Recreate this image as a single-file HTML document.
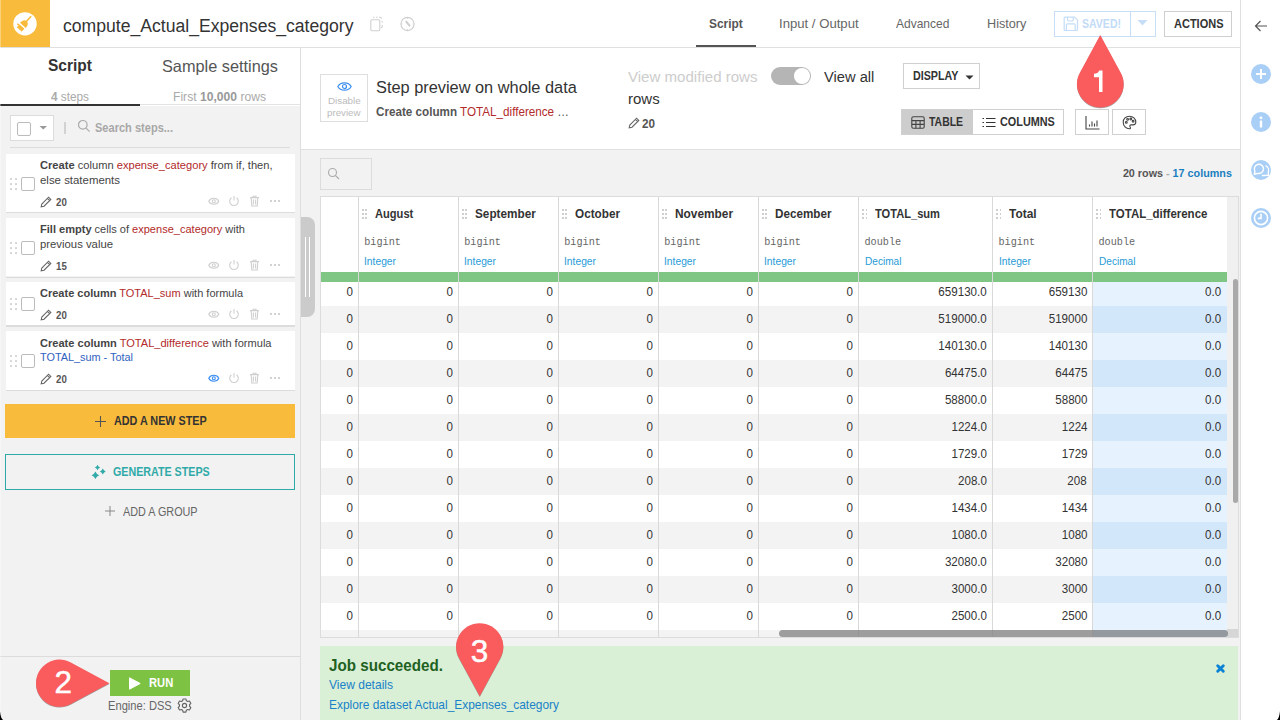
<!DOCTYPE html>
<html><head><meta charset="utf-8">
<style>
*{box-sizing:border-box;margin:0;padding:0}
html,body{width:1280px;height:720px;overflow:hidden;background:#fff;font-family:"Liberation Sans",sans-serif;color:#333}
.a{position:absolute}
.t{line-height:1;white-space:nowrap}
b{font-weight:700}
</style></head><body>
<div class="a" style="left:0px;top:0px;width:1240px;height:47px;background:#fff"></div>
<div class="a" style="left:0px;top:47px;width:1240px;height:1px;background:#e0e0e0"></div>
<div class="a" style="left:0px;top:0px;width:50px;height:47px;background:#f9bb3b"></div>
<svg class="a" style="left:0;top:0" width="50" height="47" viewBox="0 0 50 47">
<circle cx="25" cy="23.85" r="11.7" fill="#fff"/>
<g transform="translate(22.4 25.9) rotate(42)" fill="#f9bb3b">
<rect x="-0.8" y="-13.2" width="1.6" height="7.8" rx="0.8"/>
<path d="M-3.8 -0.7 C-3.9 -4.5 -2.4 -6.4 0 -6.4 C2.4 -6.4 3.9 -4.5 3.8 -0.7 Z"/>
<path d="M-3.4 0.7 H3.4 L3.2 4.9 L1.5 4.6 L0 5.0 L-1.6 4.6 L-3.2 4.9 Z"/>
<path d="M-3.4 0.7 L-5.6 1.4 L-5.2 2.6 L-3.3 2.4 Z"/>
</g></svg>
<svg class="a" style="left:368px;top:15px" width="18" height="18" viewBox="0 0 18 18" fill="none" stroke="#cfcfcf" stroke-width="1.1">
<rect x="2.8" y="4.8" width="9" height="11" rx="1.2"/>
<path d="M5 2.2 h1.5 M8 2.2 h1.5 M11 2.2 h1.3 l1.5 1.3 M14.2 6 v1.6 M14.2 10 v1.6 L13.3 13" />
</svg>
<svg class="a" style="left:399px;top:15px" width="17" height="18" viewBox="0 0 17 18" fill="none" stroke="#cfcfcf" stroke-width="1.1">
<circle cx="8.5" cy="9" r="6.6"/>
<path d="M6.3 6.5 L10.7 11.5 M7.2 5.9 L11.4 10.8" />
<path d="M8.5 2.4 v1.4 M8.5 14.2 v1.4 M1.9 9 h1.4 M13.7 9 h1.4"/>
</svg>
<div class="a" style="left:696px;top:45px;width:60px;height:2px;background:#555"></div>
<div class="a" style="left:1054px;top:11px;width:102px;height:26px;border:1px solid #c6def8;background:#fff"></div>
<div class="a" style="left:1130px;top:12px;width:1px;height:24px;background:#c6def8"></div>
<svg class="a" style="left:1063px;top:16px" width="16" height="16" viewBox="0 0 16 16" fill="none" stroke="#c4ddf8" stroke-width="1.2" stroke-linejoin="round">
<path d="M2.2 1.2 H11.5 L14.5 4.2 V13.5 Q14.5 14.5 13.5 14.5 H2.2 Q1.2 14.5 1.2 13.5 V2.2 Q1.2 1.2 2.2 1.2 Z"/><path d="M4.5 1.2 V3.4 Q4.5 5 6.1 5 H8.7 Q10.3 5 10.3 3.4 V1.2"/><path d="M3.4 14.5 V8.8 Q3.4 7.8 4.4 7.8 H11.2 Q12.2 7.8 12.2 8.8 V14.5"/>
</svg>
<svg class="a" style="left:1137px;top:19px" width="12" height="8" viewBox="0 0 12 8"><path d="M0.5 1 h10 l-5 5.5z" fill="#c6def8"/></svg>
<div class="a" style="left:1164px;top:11px;width:68px;height:26px;border:1px solid #cfcfcf;background:#fff"></div>
<div class="a" style="left:1240px;top:0px;width:1px;height:720px;background:#e0e0e0"></div>
<div class="a" style="left:1241px;top:0px;width:39px;height:720px;background:#fff"></div>
<svg class="a" style="left:1253px;top:18px" width="16" height="16" viewBox="0 0 16 16" fill="none" stroke="#555" stroke-width="1.2">
<path d="M14 8 H2.5 M7.5 3 L2.5 8 L7.5 13"/></svg>
<div class="a" style="left:1250.9px;top:63.7px;width:20.4px;height:20.4px;border-radius:50%;background:#a9cff6"></div>
<div class="a" style="left:1250.9px;top:111.8px;width:20.4px;height:20.4px;border-radius:50%;background:#a9cff6"></div>
<div class="a" style="left:1250.9px;top:159.70000000000002px;width:20.4px;height:20.4px;border-radius:50%;background:#a9cff6"></div>
<div class="a" style="left:1250.9px;top:207.8px;width:20.4px;height:20.4px;border-radius:50%;background:#a9cff6"></div>
<svg class="a" style="left:1251px;top:63.9px" width="20" height="20" viewBox="0 0 20 20" stroke="#fff" stroke-width="2" fill="none"><path d="M10 5 v10 M5 10 h10"/></svg>
<svg class="a" style="left:1251px;top:112px" width="20" height="20" viewBox="0 0 20 20" fill="#fff"><circle cx="10" cy="5.8" r="1.4"/><rect x="8.8" y="8.4" width="2.4" height="7.2" rx="0.6"/></svg>
<svg class="a" style="left:1251px;top:159.9px" width="20" height="20" viewBox="0 0 20 20" stroke="#fff" stroke-width="1.4" fill="none" stroke-linejoin="round"><path d="M3.92 11.2 A4.6 4.6 0 1 1 7.1 13.43 L3.3 14.3 Z"/><path d="M14.6 5.7 A5.2 5.2 0 0 1 17.3 12.2 L17.5 15.3 L10.8 15.5"/></svg>
<svg class="a" style="left:1251px;top:208px" width="20" height="20" viewBox="0 0 20 20" stroke="#fff" stroke-width="1.6" fill="none"><circle cx="10" cy="10" r="6.6"/><path d="M10 5.8 V10.4 H6.8"/></svg>
<div class="a" style="left:0px;top:48px;width:300px;height:58px;background:#fff"></div>
<div class="a" style="left:300px;top:48px;width:1px;height:672px;background:#dedede"></div>
<div class="a" style="left:0px;top:106px;width:300px;height:614px;background:#f2f2f2"></div>
<div class="a" style="left:0px;top:104px;width:300px;height:1px;background:#e3e3e3"></div>
<div class="a" style="left:0px;top:104px;width:140px;height:2px;background:#333"></div>
<div class="a" style="left:10px;top:115px;width:44px;height:26px;border:1px solid #dcdcdc;background:#fff"></div>
<div class="a" style="left:17px;top:122px;width:14px;height:14px;border:1px solid #bbb;border-radius:2px;background:#fff"></div>
<svg class="a" style="left:39px;top:125px" width="9" height="6" viewBox="0 0 9 6"><path d="M0.5 1 h7.5 l-3.75 3.6z" fill="#999"/></svg>
<div class="a" style="left:64px;top:122px;width:1.8px;height:11.8px;background:#d2d2d2"></div>
<svg class="a" style="left:77px;top:119px" width="14" height="14" viewBox="0 0 14 14" fill="none" stroke="#aaa" stroke-width="1.2"><circle cx="5.8" cy="5.8" r="4.3"/><path d="M8.8 8.8 L12.6 12.6"/></svg>
<div class="a" style="left:10px;top:147px;width:280px;height:1px;background:#dcdcdc"></div>
<div class="a" style="left:5.5px;top:153.7px;width:289px;height:58.5px;background:#fff"></div>
<div class="a" style="left:5.5px;top:212.29999999999998px;width:289px;height:1.2px;background:#dcdcdc"></div>
<div class="a" style="left:10px;top:177.7px;width:2.2px;height:2.2px;background:#d4d4d4;border-radius:0.5px"></div>
<div class="a" style="left:10px;top:182.7px;width:2.2px;height:2.2px;background:#d4d4d4;border-radius:0.5px"></div>
<div class="a" style="left:10px;top:187.7px;width:2.2px;height:2.2px;background:#d4d4d4;border-radius:0.5px"></div>
<div class="a" style="left:15px;top:177.7px;width:2.2px;height:2.2px;background:#d4d4d4;border-radius:0.5px"></div>
<div class="a" style="left:15px;top:182.7px;width:2.2px;height:2.2px;background:#d4d4d4;border-radius:0.5px"></div>
<div class="a" style="left:15px;top:187.7px;width:2.2px;height:2.2px;background:#d4d4d4;border-radius:0.5px"></div>
<div class="a" style="left:21px;top:176.7px;width:14px;height:14px;border:1px solid #bbb;border-radius:2px;background:#fff"></div>
<svg class="a" style="left:40px;top:196.0px" width="12" height="12" viewBox="0 0 12 12" fill="none" stroke="#666" stroke-width="1.1"><path d="M1.2 10.8 L1.8 8 L8.6 1.2 L10.8 3.4 L4 10.2 Z M7.4 2.4 L9.6 4.6"/></svg>
<svg class="a" style="left:207px;top:194.9px" width="13" height="12" viewBox="0 0 13 12" fill="none" stroke="#cfcfcf" stroke-width="1.1"><path d="M1.8 6.3 C3.6 2.3 10 2.3 11.8 6.3 C10 10.3 3.6 10.3 1.8 6.3 Z"/><circle cx="6.8" cy="6.3" r="1.5"/></svg>
<svg class="a" style="left:228px;top:194.9px" width="12" height="12" viewBox="0 0 12 12" fill="none" stroke="#cfcfcf" stroke-width="1.1"><path d="M6 1 V5.6 M3.4 2.8 A4.3 4.3 0 1 0 8.6 2.8"/></svg>
<svg class="a" style="left:249px;top:194.9px" width="11" height="12" viewBox="0 0 11 12" fill="none" stroke="#cfcfcf" stroke-width="1.1"><path d="M1 2.6 H10 M4 2.4 V1.2 H7 V2.4 M2.2 2.8 L2.8 11 H8.2 L8.8 2.8 M4.4 4.4 V9.4 M6.6 4.4 V9.4"/></svg>
<div class="a" style="left:270px;top:200px;width:2px;height:2px;background:#d2d2d2"></div>
<div class="a" style="left:274px;top:200px;width:2px;height:2px;background:#d2d2d2"></div>
<div class="a" style="left:278px;top:200px;width:2px;height:2px;background:#d2d2d2"></div>
<div class="a" style="left:5.5px;top:217.9px;width:289px;height:58.5px;background:#fff"></div>
<div class="a" style="left:5.5px;top:276.5px;width:289px;height:1.2px;background:#dcdcdc"></div>
<div class="a" style="left:10px;top:241.9px;width:2.2px;height:2.2px;background:#d4d4d4;border-radius:0.5px"></div>
<div class="a" style="left:10px;top:246.9px;width:2.2px;height:2.2px;background:#d4d4d4;border-radius:0.5px"></div>
<div class="a" style="left:10px;top:251.9px;width:2.2px;height:2.2px;background:#d4d4d4;border-radius:0.5px"></div>
<div class="a" style="left:15px;top:241.9px;width:2.2px;height:2.2px;background:#d4d4d4;border-radius:0.5px"></div>
<div class="a" style="left:15px;top:246.9px;width:2.2px;height:2.2px;background:#d4d4d4;border-radius:0.5px"></div>
<div class="a" style="left:15px;top:251.9px;width:2.2px;height:2.2px;background:#d4d4d4;border-radius:0.5px"></div>
<div class="a" style="left:21px;top:240.9px;width:14px;height:14px;border:1px solid #bbb;border-radius:2px;background:#fff"></div>
<svg class="a" style="left:40px;top:260.2px" width="12" height="12" viewBox="0 0 12 12" fill="none" stroke="#666" stroke-width="1.1"><path d="M1.2 10.8 L1.8 8 L8.6 1.2 L10.8 3.4 L4 10.2 Z M7.4 2.4 L9.6 4.6"/></svg>
<svg class="a" style="left:207px;top:259.09999999999997px" width="13" height="12" viewBox="0 0 13 12" fill="none" stroke="#cfcfcf" stroke-width="1.1"><path d="M1.8 6.3 C3.6 2.3 10 2.3 11.8 6.3 C10 10.3 3.6 10.3 1.8 6.3 Z"/><circle cx="6.8" cy="6.3" r="1.5"/></svg>
<svg class="a" style="left:228px;top:259.09999999999997px" width="12" height="12" viewBox="0 0 12 12" fill="none" stroke="#cfcfcf" stroke-width="1.1"><path d="M6 1 V5.6 M3.4 2.8 A4.3 4.3 0 1 0 8.6 2.8"/></svg>
<svg class="a" style="left:249px;top:259.09999999999997px" width="11" height="12" viewBox="0 0 11 12" fill="none" stroke="#cfcfcf" stroke-width="1.1"><path d="M1 2.6 H10 M4 2.4 V1.2 H7 V2.4 M2.2 2.8 L2.8 11 H8.2 L8.8 2.8 M4.4 4.4 V9.4 M6.6 4.4 V9.4"/></svg>
<div class="a" style="left:270px;top:264px;width:2px;height:2px;background:#d2d2d2"></div>
<div class="a" style="left:274px;top:264px;width:2px;height:2px;background:#d2d2d2"></div>
<div class="a" style="left:278px;top:264px;width:2px;height:2px;background:#d2d2d2"></div>
<div class="a" style="left:5.5px;top:281.8px;width:289px;height:43.5px;background:#fff"></div>
<div class="a" style="left:5.5px;top:325.40000000000003px;width:289px;height:1.2px;background:#dcdcdc"></div>
<div class="a" style="left:10px;top:298.3px;width:2.2px;height:2.2px;background:#d4d4d4;border-radius:0.5px"></div>
<div class="a" style="left:10px;top:303.3px;width:2.2px;height:2.2px;background:#d4d4d4;border-radius:0.5px"></div>
<div class="a" style="left:10px;top:308.3px;width:2.2px;height:2.2px;background:#d4d4d4;border-radius:0.5px"></div>
<div class="a" style="left:15px;top:298.3px;width:2.2px;height:2.2px;background:#d4d4d4;border-radius:0.5px"></div>
<div class="a" style="left:15px;top:303.3px;width:2.2px;height:2.2px;background:#d4d4d4;border-radius:0.5px"></div>
<div class="a" style="left:15px;top:308.3px;width:2.2px;height:2.2px;background:#d4d4d4;border-radius:0.5px"></div>
<div class="a" style="left:21px;top:297.3px;width:14px;height:14px;border:1px solid #bbb;border-radius:2px;background:#fff"></div>
<svg class="a" style="left:40px;top:309.0px" width="12" height="12" viewBox="0 0 12 12" fill="none" stroke="#666" stroke-width="1.1"><path d="M1.2 10.8 L1.8 8 L8.6 1.2 L10.8 3.4 L4 10.2 Z M7.4 2.4 L9.6 4.6"/></svg>
<svg class="a" style="left:207px;top:307.9px" width="13" height="12" viewBox="0 0 13 12" fill="none" stroke="#cfcfcf" stroke-width="1.1"><path d="M1.8 6.3 C3.6 2.3 10 2.3 11.8 6.3 C10 10.3 3.6 10.3 1.8 6.3 Z"/><circle cx="6.8" cy="6.3" r="1.5"/></svg>
<svg class="a" style="left:228px;top:307.9px" width="12" height="12" viewBox="0 0 12 12" fill="none" stroke="#cfcfcf" stroke-width="1.1"><path d="M6 1 V5.6 M3.4 2.8 A4.3 4.3 0 1 0 8.6 2.8"/></svg>
<svg class="a" style="left:249px;top:307.9px" width="11" height="12" viewBox="0 0 11 12" fill="none" stroke="#cfcfcf" stroke-width="1.1"><path d="M1 2.6 H10 M4 2.4 V1.2 H7 V2.4 M2.2 2.8 L2.8 11 H8.2 L8.8 2.8 M4.4 4.4 V9.4 M6.6 4.4 V9.4"/></svg>
<div class="a" style="left:270px;top:313px;width:2px;height:2px;background:#d2d2d2"></div>
<div class="a" style="left:274px;top:313px;width:2px;height:2px;background:#d2d2d2"></div>
<div class="a" style="left:278px;top:313px;width:2px;height:2px;background:#d2d2d2"></div>
<div class="a" style="left:5.5px;top:331.0px;width:289px;height:58.5px;background:#fff"></div>
<div class="a" style="left:5.5px;top:389.6px;width:289px;height:1.2px;background:#dcdcdc"></div>
<div class="a" style="left:10px;top:355.0px;width:2.2px;height:2.2px;background:#d4d4d4;border-radius:0.5px"></div>
<div class="a" style="left:10px;top:360.0px;width:2.2px;height:2.2px;background:#d4d4d4;border-radius:0.5px"></div>
<div class="a" style="left:10px;top:365.0px;width:2.2px;height:2.2px;background:#d4d4d4;border-radius:0.5px"></div>
<div class="a" style="left:15px;top:355.0px;width:2.2px;height:2.2px;background:#d4d4d4;border-radius:0.5px"></div>
<div class="a" style="left:15px;top:360.0px;width:2.2px;height:2.2px;background:#d4d4d4;border-radius:0.5px"></div>
<div class="a" style="left:15px;top:365.0px;width:2.2px;height:2.2px;background:#d4d4d4;border-radius:0.5px"></div>
<div class="a" style="left:21px;top:354.0px;width:14px;height:14px;border:1px solid #bbb;border-radius:2px;background:#fff"></div>
<svg class="a" style="left:40px;top:373.3px" width="12" height="12" viewBox="0 0 12 12" fill="none" stroke="#666" stroke-width="1.1"><path d="M1.2 10.8 L1.8 8 L8.6 1.2 L10.8 3.4 L4 10.2 Z M7.4 2.4 L9.6 4.6"/></svg>
<svg class="a" style="left:207px;top:372.2px" width="13" height="12" viewBox="0 0 13 12" fill="none" stroke="#3b8ef0" stroke-width="1.1"><path d="M1.8 6.3 C3.6 2.3 10 2.3 11.8 6.3 C10 10.3 3.6 10.3 1.8 6.3 Z"/><circle cx="6.8" cy="6.3" r="1.5"/></svg>
<svg class="a" style="left:228px;top:372.2px" width="12" height="12" viewBox="0 0 12 12" fill="none" stroke="#cfcfcf" stroke-width="1.1"><path d="M6 1 V5.6 M3.4 2.8 A4.3 4.3 0 1 0 8.6 2.8"/></svg>
<svg class="a" style="left:249px;top:372.2px" width="11" height="12" viewBox="0 0 11 12" fill="none" stroke="#cfcfcf" stroke-width="1.1"><path d="M1 2.6 H10 M4 2.4 V1.2 H7 V2.4 M2.2 2.8 L2.8 11 H8.2 L8.8 2.8 M4.4 4.4 V9.4 M6.6 4.4 V9.4"/></svg>
<div class="a" style="left:270px;top:377px;width:2px;height:2px;background:#d2d2d2"></div>
<div class="a" style="left:274px;top:377px;width:2px;height:2px;background:#d2d2d2"></div>
<div class="a" style="left:278px;top:377px;width:2px;height:2px;background:#d2d2d2"></div>
<div class="a" style="left:5px;top:404px;width:290px;height:34px;background:#f9bb3b"></div>
<svg class="a" style="left:95px;top:415.5px" width="11" height="11" viewBox="0 0 11 11" stroke="#555" stroke-width="1.1"><path d="M5.5 0 V11 M0 5.5 H11"/></svg>
<div class="a" style="left:5px;top:454px;width:290px;height:36px;border:1.5px solid #2faaa8"></div>
<svg class="a" style="left:91px;top:464px" width="18" height="18" viewBox="0 0 18 18" fill="#2faaa8"><path d="M6.5 0.7999999999999998 Q7.256 2.7439999999999998 9.2 3.5 Q7.256 4.256 6.5 6.2 Q5.744 4.256 3.8 3.5 Q5.744 2.7439999999999998 6.5 0.7999999999999998 Z M11.8 4.6 Q12.612 6.688 14.700000000000001 7.5 Q12.612 8.312 11.8 10.4 Q10.988000000000001 8.312 8.9 7.5 Q10.988000000000001 6.688 11.8 4.6 Z M4.4 7.500000000000001 Q5.464 10.236 8.2 11.3 Q5.464 12.364 4.4 15.100000000000001 Q3.3360000000000003 12.364 0.6000000000000005 11.3 Q3.3360000000000003 10.236 4.4 7.500000000000001 Z"/></svg>
<svg class="a" style="left:104.5px;top:506px" width="10" height="10" viewBox="0 0 10 10" stroke="#888" stroke-width="1"><path d="M5 0 V10 M0 5 H10"/></svg>
<div class="a" style="left:0px;top:656px;width:300px;height:1px;background:#dcdcdc"></div>
<div class="a" style="left:110px;top:670px;width:80px;height:26px;background:#7dc242"></div>
<svg class="a" style="left:129px;top:676.5px" width="12" height="13" viewBox="0 0 12 13"><path d="M0.5 0.8 L11.2 6.5 L0.5 12.2 Z" fill="#fff" stroke="#fff" stroke-linejoin="round" stroke-width="1"/></svg>
<svg class="a" style="left:176.9px;top:698.2px" width="15" height="15" viewBox="0 0 15 15" fill="none" stroke="#666" stroke-width="1.15" stroke-linejoin="round"><path d="M5.62 2.76 L6.11 0.95 L8.89 0.95 L9.38 2.76 L10.67 3.50 L12.48 3.02 L13.87 5.43 L12.55 6.75 L12.55 8.25 L13.87 9.57 L12.48 11.98 L10.67 11.50 L9.38 12.24 L8.89 14.05 L6.11 14.05 L5.62 12.24 L4.33 11.50 L2.52 11.98 L1.13 9.57 L2.45 8.25 L2.45 6.75 L1.13 5.43 L2.52 3.02 L4.33 3.50 Z"/><circle cx="7.5" cy="7.5" r="2.1"/></svg>
<div class="a" style="left:301px;top:48px;width:939px;height:101px;background:#fff"></div>
<div class="a" style="left:301px;top:149px;width:939px;height:1px;background:#e0e0e0"></div>
<div class="a" style="left:301px;top:150px;width:939px;height:570px;background:#f2f2f2"></div>
<div class="a" style="left:320px;top:74px;width:48px;height:48px;border:1px solid #dedede;background:#fff"></div>
<svg class="a" style="left:336.5px;top:80.5px" width="15" height="11" viewBox="0 0 15 11" fill="none" stroke="#3b8ef0" stroke-width="1.2"><path d="M0.8 5.5 C3.6 0.6 11.4 0.6 14.2 5.5 C11.4 10.4 3.6 10.4 0.8 5.5 Z"/><circle cx="7.5" cy="5.5" r="2"/></svg>
<div class="a" style="left:771px;top:67px;width:40px;height:18px;background:#b5b5b5;border-radius:9px"></div>
<div class="a" style="left:793.5px;top:68px;width:16.5px;height:16px;background:#fff;border-radius:50%"></div>
<svg class="a" style="left:628px;top:117px" width="12" height="12" viewBox="0 0 12 12" fill="none" stroke="#666" stroke-width="1.1"><path d="M1.2 10.8 L1.8 8 L8.6 1.2 L10.8 3.4 L4 10.2 Z M7.4 2.4 L9.6 4.6"/></svg>
<div class="a" style="left:903px;top:63px;width:77px;height:26px;border:1px solid #d0d0d0;background:#fff"></div>
<svg class="a" style="left:964.5px;top:74.5px" width="9" height="5" viewBox="0 0 9 5"><path d="M0.5 0.5 h8 l-4 4z" fill="#333"/></svg>
<div class="a" style="left:901px;top:109px;width:163px;height:26px;border:1px solid #d0d0d0;background:#fff"></div>
<div class="a" style="left:902px;top:110px;width:71px;height:24px;background:#cdcdcd"></div>
<svg class="a" style="left:910.5px;top:115.5px" width="14" height="13" viewBox="0 0 14 13" fill="none" stroke="#444" stroke-width="1.1"><rect x="0.8" y="0.8" width="12.4" height="11.4" rx="1.5"/><path d="M0.8 4.6 H13.2 M0.8 8.4 H13.2 M4.9 4.6 V12.2 M9.1 4.6 V12.2"/></svg>
<svg class="a" style="left:981.5px;top:116.5px" width="14" height="11" viewBox="0 0 14 11" fill="none" stroke="#333" stroke-width="1.1"><path d="M0.5 1.5 H2 M0.5 5.5 H2 M0.5 9.5 H2 M4 1.5 H13.5 M4 5.5 H13.5 M4 9.5 H13.5"/></svg>
<div class="a" style="left:1075px;top:109px;width:34px;height:26px;border:1px solid #d0d0d0;background:#fff"></div>
<svg class="a" style="left:1084.5px;top:114.5px" width="15" height="15" viewBox="0 0 15 15" fill="none" stroke="#444" stroke-width="1.1"><path d="M1 1 V14 H14.5 M4.5 11.5 V9.5 M7 11.5 V6.5 M9.5 11.5 V8.5 M12 11.5 V5.5"/></svg>
<div class="a" style="left:1112px;top:109px;width:34px;height:26px;border:1px solid #d0d0d0;background:#fff"></div>
<svg class="a" style="left:1121.5px;top:114.5px" width="15" height="15" viewBox="0 0 15 15" fill="none" stroke="#444" stroke-width="1.1"><path d="M7.5 1.2 C3.8 1.2 1.2 3.9 1.2 7.3 C1.2 10.9 4.1 13.8 7.3 13.8 C8.6 13.8 8.8 12.8 8.1 12 C7.4 11.1 7.9 9.9 9.1 9.9 H11 C12.6 9.9 13.8 8.8 13.8 7.1 C13.8 3.8 11 1.2 7.5 1.2 Z"/><circle cx="4.3" cy="7.4" r="0.9"/><circle cx="5.6" cy="4.4" r="0.9"/><circle cx="8.8" cy="4" r="0.9"/><circle cx="11.1" cy="6.2" r="0.9"/></svg>
<div class="a" style="left:320px;top:158px;width:52px;height:32px;border:1px solid #dcdcdc;background:#f2f2f2"></div>
<svg class="a" style="left:327px;top:167px" width="14" height="14" viewBox="0 0 14 14" fill="none" stroke="#aaa" stroke-width="1.1"><circle cx="5.5" cy="5.5" r="4"/><path d="M8.3 8.3 L12 12"/></svg>
<div class="a" style="left:320px;top:196px;width:919px;height:442px;background:#fff;border:1px solid #dcdcdc"></div>
<div class="a" style="left:1092.5px;top:278.75px;width:134.5px;height:27.0px;background:#e6f2fd"></div>
<div class="a" style="left:321px;top:305.75px;width:906px;height:27.0px;background:#f3f3f3"></div>
<div class="a" style="left:1092.5px;top:305.75px;width:134.5px;height:27.0px;background:#d3e7fa"></div>
<div class="a" style="left:1092.5px;top:332.75px;width:134.5px;height:27.0px;background:#e6f2fd"></div>
<div class="a" style="left:321px;top:359.75px;width:906px;height:27.0px;background:#f3f3f3"></div>
<div class="a" style="left:1092.5px;top:359.75px;width:134.5px;height:27.0px;background:#d3e7fa"></div>
<div class="a" style="left:1092.5px;top:386.75px;width:134.5px;height:27.0px;background:#e6f2fd"></div>
<div class="a" style="left:321px;top:413.75px;width:906px;height:27.0px;background:#f3f3f3"></div>
<div class="a" style="left:1092.5px;top:413.75px;width:134.5px;height:27.0px;background:#d3e7fa"></div>
<div class="a" style="left:1092.5px;top:440.75px;width:134.5px;height:27.0px;background:#e6f2fd"></div>
<div class="a" style="left:321px;top:467.75px;width:906px;height:27.0px;background:#f3f3f3"></div>
<div class="a" style="left:1092.5px;top:467.75px;width:134.5px;height:27.0px;background:#d3e7fa"></div>
<div class="a" style="left:1092.5px;top:494.75px;width:134.5px;height:27.0px;background:#e6f2fd"></div>
<div class="a" style="left:321px;top:521.75px;width:906px;height:27.0px;background:#f3f3f3"></div>
<div class="a" style="left:1092.5px;top:521.75px;width:134.5px;height:27.0px;background:#d3e7fa"></div>
<div class="a" style="left:1092.5px;top:548.75px;width:134.5px;height:27.0px;background:#e6f2fd"></div>
<div class="a" style="left:321px;top:575.75px;width:906px;height:27.0px;background:#f3f3f3"></div>
<div class="a" style="left:1092.5px;top:575.75px;width:134.5px;height:27.0px;background:#d3e7fa"></div>
<div class="a" style="left:1092.5px;top:602.75px;width:134.5px;height:27.0px;background:#e6f2fd"></div>
<div class="a" style="left:321px;top:629.75px;width:906px;height:7.25px;background:#f3f3f3"></div>
<div class="a" style="left:1092.5px;top:629.75px;width:134.5px;height:7.25px;background:#d3e7fa"></div>
<div class="a" style="left:321px;top:272px;width:906px;height:10px;background:#7fc685"></div>
<div class="a" style="left:357.75px;top:197px;width:1px;height:440px;background:#d9d9d9"></div>
<div class="a" style="left:457.75px;top:197px;width:1px;height:440px;background:#d9d9d9"></div>
<div class="a" style="left:557.75px;top:197px;width:1px;height:440px;background:#d9d9d9"></div>
<div class="a" style="left:657.75px;top:197px;width:1px;height:440px;background:#d9d9d9"></div>
<div class="a" style="left:757.75px;top:197px;width:1px;height:440px;background:#d9d9d9"></div>
<div class="a" style="left:858.0px;top:197px;width:1px;height:440px;background:#d9d9d9"></div>
<div class="a" style="left:992.0px;top:197px;width:1px;height:440px;background:#d9d9d9"></div>
<div class="a" style="left:1092.0px;top:197px;width:1px;height:440px;background:#d9d9d9"></div>
<div class="a" style="left:361.75px;top:209px;width:1.8px;height:1.8px;background:#cfcfcf"></div>
<div class="a" style="left:361.75px;top:213px;width:1.8px;height:1.8px;background:#cfcfcf"></div>
<div class="a" style="left:361.75px;top:217px;width:1.8px;height:1.8px;background:#cfcfcf"></div>
<div class="a" style="left:365.25px;top:209px;width:1.8px;height:1.8px;background:#cfcfcf"></div>
<div class="a" style="left:365.25px;top:213px;width:1.8px;height:1.8px;background:#cfcfcf"></div>
<div class="a" style="left:365.25px;top:217px;width:1.8px;height:1.8px;background:#cfcfcf"></div>
<div class="a" style="left:461.75px;top:209px;width:1.8px;height:1.8px;background:#cfcfcf"></div>
<div class="a" style="left:461.75px;top:213px;width:1.8px;height:1.8px;background:#cfcfcf"></div>
<div class="a" style="left:461.75px;top:217px;width:1.8px;height:1.8px;background:#cfcfcf"></div>
<div class="a" style="left:465.25px;top:209px;width:1.8px;height:1.8px;background:#cfcfcf"></div>
<div class="a" style="left:465.25px;top:213px;width:1.8px;height:1.8px;background:#cfcfcf"></div>
<div class="a" style="left:465.25px;top:217px;width:1.8px;height:1.8px;background:#cfcfcf"></div>
<div class="a" style="left:561.75px;top:209px;width:1.8px;height:1.8px;background:#cfcfcf"></div>
<div class="a" style="left:561.75px;top:213px;width:1.8px;height:1.8px;background:#cfcfcf"></div>
<div class="a" style="left:561.75px;top:217px;width:1.8px;height:1.8px;background:#cfcfcf"></div>
<div class="a" style="left:565.25px;top:209px;width:1.8px;height:1.8px;background:#cfcfcf"></div>
<div class="a" style="left:565.25px;top:213px;width:1.8px;height:1.8px;background:#cfcfcf"></div>
<div class="a" style="left:565.25px;top:217px;width:1.8px;height:1.8px;background:#cfcfcf"></div>
<div class="a" style="left:661.75px;top:209px;width:1.8px;height:1.8px;background:#cfcfcf"></div>
<div class="a" style="left:661.75px;top:213px;width:1.8px;height:1.8px;background:#cfcfcf"></div>
<div class="a" style="left:661.75px;top:217px;width:1.8px;height:1.8px;background:#cfcfcf"></div>
<div class="a" style="left:665.25px;top:209px;width:1.8px;height:1.8px;background:#cfcfcf"></div>
<div class="a" style="left:665.25px;top:213px;width:1.8px;height:1.8px;background:#cfcfcf"></div>
<div class="a" style="left:665.25px;top:217px;width:1.8px;height:1.8px;background:#cfcfcf"></div>
<div class="a" style="left:761.75px;top:209px;width:1.8px;height:1.8px;background:#cfcfcf"></div>
<div class="a" style="left:761.75px;top:213px;width:1.8px;height:1.8px;background:#cfcfcf"></div>
<div class="a" style="left:761.75px;top:217px;width:1.8px;height:1.8px;background:#cfcfcf"></div>
<div class="a" style="left:765.25px;top:209px;width:1.8px;height:1.8px;background:#cfcfcf"></div>
<div class="a" style="left:765.25px;top:213px;width:1.8px;height:1.8px;background:#cfcfcf"></div>
<div class="a" style="left:765.25px;top:217px;width:1.8px;height:1.8px;background:#cfcfcf"></div>
<div class="a" style="left:862.0px;top:209px;width:1.8px;height:1.8px;background:#cfcfcf"></div>
<div class="a" style="left:862.0px;top:213px;width:1.8px;height:1.8px;background:#cfcfcf"></div>
<div class="a" style="left:862.0px;top:217px;width:1.8px;height:1.8px;background:#cfcfcf"></div>
<div class="a" style="left:865.5px;top:209px;width:1.8px;height:1.8px;background:#cfcfcf"></div>
<div class="a" style="left:865.5px;top:213px;width:1.8px;height:1.8px;background:#cfcfcf"></div>
<div class="a" style="left:865.5px;top:217px;width:1.8px;height:1.8px;background:#cfcfcf"></div>
<div class="a" style="left:996.0px;top:209px;width:1.8px;height:1.8px;background:#cfcfcf"></div>
<div class="a" style="left:996.0px;top:213px;width:1.8px;height:1.8px;background:#cfcfcf"></div>
<div class="a" style="left:996.0px;top:217px;width:1.8px;height:1.8px;background:#cfcfcf"></div>
<div class="a" style="left:999.5px;top:209px;width:1.8px;height:1.8px;background:#cfcfcf"></div>
<div class="a" style="left:999.5px;top:213px;width:1.8px;height:1.8px;background:#cfcfcf"></div>
<div class="a" style="left:999.5px;top:217px;width:1.8px;height:1.8px;background:#cfcfcf"></div>
<div class="a" style="left:1096.0px;top:209px;width:1.8px;height:1.8px;background:#cfcfcf"></div>
<div class="a" style="left:1096.0px;top:213px;width:1.8px;height:1.8px;background:#cfcfcf"></div>
<div class="a" style="left:1096.0px;top:217px;width:1.8px;height:1.8px;background:#cfcfcf"></div>
<div class="a" style="left:1099.5px;top:209px;width:1.8px;height:1.8px;background:#cfcfcf"></div>
<div class="a" style="left:1099.5px;top:213px;width:1.8px;height:1.8px;background:#cfcfcf"></div>
<div class="a" style="left:1099.5px;top:217px;width:1.8px;height:1.8px;background:#cfcfcf"></div>
<div class="a" style="left:1227px;top:197px;width:11px;height:440px;background:#f0f0f0"></div>
<div class="a" style="left:1233px;top:279px;width:4.8px;height:224px;background:#a9a9a9;border-radius:3px"></div>
<div class="a" style="left:1227px;top:629px;width:11px;height:8px;background:#d6d6d6"></div>
<div class="a" style="left:778.8px;top:630px;width:449px;height:7px;background:rgba(120,120,120,0.7);border-radius:4px"></div>
<div class="a" style="left:300.5px;top:217px;width:14.2px;height:100px;background:#cbcbcb;border-radius:0 8px 8px 0"></div>
<div class="a" style="left:305px;top:237px;width:1px;height:60px;background:#fff"></div>
<div class="a" style="left:309px;top:237px;width:1px;height:60px;background:#fff"></div>
<div class="a" style="left:320px;top:646px;width:918px;height:74px;background:#d9efd6"></div>
<svg class="a" style="left:1215.3px;top:663.2px" width="11" height="11" viewBox="0 0 11 11" stroke="#0b83d4" stroke-width="2.9" stroke-linecap="round"><path d="M2.7 2.7 L8.3 8.3 M8.3 2.7 L2.7 8.3"/></svg>
<svg class="a" style="left:0;top:0;overflow:visible" width="1280" height="720"><path d="M1100.25 35.00 L1120.86 72.93 A23.4 23.4 0 1 1 1079.72 72.97 Z" fill="#555" opacity="0.55" transform="translate(0 0.7)"/><path d="M1100.25 35.00 L1120.86 72.93 A23.4 23.4 0 1 1 1079.72 72.97 Z" fill="#fa5b5c"/></svg>
<svg class="a" style="left:0;top:0;overflow:visible" width="1280" height="720"><path d="M1102.5 70.5 V92 H1099 V77.2 H1094 V73.8 C1096.6 73.8 1098.5 72.6 1099.1 70.5 Z" fill="#fff"/></svg>
<svg class="a" style="left:0;top:0;overflow:visible" width="1280" height="720"><path d="M109.40 683.20 L70.78 703.98 A23.6 23.6 0 1 1 70.78 662.42 Z" fill="#555" opacity="0.55" transform="translate(0 0.7)"/><path d="M109.40 683.20 L70.78 703.98 A23.6 23.6 0 1 1 70.78 662.42 Z" fill="#fa5b5c"/></svg>
<svg class="a" style="left:0;top:0;overflow:visible" width="1280" height="720"><path d="M479.75 696.25 L458.97 658.08 A23.6 23.6 0 1 1 500.45 658.04 Z" fill="#555" opacity="0.55" transform="translate(0 0.7)"/><path d="M479.75 696.25 L458.97 658.08 A23.6 23.6 0 1 1 500.45 658.04 Z" fill="#fa5b5c"/></svg>
<div class="a" style="left:0px;top:0px;width:1px;height:712px;background:rgba(255,255,255,0.32)"></div>
<svg class="a" style="left:0;top:0;overflow:visible" width="1280" height="720"><path d="M0 711.5 C0.6 716.5 1.5 719 3.2 720 L0 720 Z" fill="#000"/><path d="M1280 711 C1279.4 716 1278.5 719 1276.8 720 L1280 720 Z" fill="#000"/></svg>
<div class="a t" id="t0" style="top:17.705px;font-size:17.6px;font-weight:400;color:#333;font-family:'Liberation Sans', sans-serif;left:62.5px;transform:scaleX(1.0001);transform-origin:left top;">compute_Actual_Expenses_category</div>
<div class="a t" id="t1" style="top:17.914px;font-size:12.38px;font-weight:700;color:#555;font-family:'Liberation Sans', sans-serif;left:709.4px;transform:scaleX(0.9607);transform-origin:left top;">Script</div>
<div class="a t" id="t2" style="top:16.912px;font-size:13.25px;font-weight:400;color:#666;font-family:'Liberation Sans', sans-serif;left:779.4px;transform:scaleX(0.9913);transform-origin:left top;">Input / Output</div>
<div class="a t" id="t3" style="top:17.911px;font-size:12.9px;font-weight:400;color:#666;font-family:'Liberation Sans', sans-serif;left:896px;transform:scaleX(0.9312);transform-origin:left top;">Advanced</div>
<div class="a t" id="t4" style="top:16.906px;font-size:13.11px;font-weight:400;color:#666;font-family:'Liberation Sans', sans-serif;left:986.5px;transform:scaleX(0.9658);transform-origin:left top;">History</div>
<div class="a t" id="t5" style="top:18.007px;font-size:12.47px;font-weight:700;color:#c2dbf7;font-family:'Liberation Sans', sans-serif;left:1082px;transform:scaleX(0.8444);transform-origin:left top;">SAVED!</div>
<div class="a t" id="t6" style="top:19.005px;font-size:11.9px;font-weight:700;color:#333;font-family:'Liberation Sans', sans-serif;left:1173.5px;transform:scaleX(0.9250);transform-origin:left top;">ACTIONS</div>
<div class="a t" id="t7" style="top:56.703px;font-size:16.07px;font-weight:700;color:#333;font-family:'Liberation Sans', sans-serif;left:48px;transform:scaleX(0.9664);transform-origin:left top;">Script</div>
<div class="a t" id="t8" style="top:58.501px;font-size:15.67px;font-weight:400;color:#555;font-family:'Liberation Sans', sans-serif;left:162px;transform:scaleX(1.0414);transform-origin:left top;">Sample settings</div>
<div class="a t" id="t9" style="top:90.505px;font-size:12.14px;font-weight:400;color:#aaa;font-family:'Liberation Sans', sans-serif;left:51px;transform:scaleX(0.9716);transform-origin:left top;"><b style="color:#aaa">4</b> steps</div>
<div class="a t" id="t10" style="top:90.505px;font-size:12.25px;font-weight:400;color:#aaa;font-family:'Liberation Sans', sans-serif;left:173px;transform:scaleX(0.9897);transform-origin:left top;">First <b style="color:#999">10,000</b> rows</div>
<div class="a t" id="t11" style="top:121.505px;font-size:12.38px;font-weight:700;color:#a8a8a8;font-family:'Liberation Sans', sans-serif;left:95px;transform:scaleX(0.8929);transform-origin:left top;">Search steps...</div>
<div class="a t" id="t12" style="top:160.214px;font-size:11.59px;font-weight:400;color:#444;font-family:'Liberation Sans', sans-serif;left:40px;transform:scaleX(0.9611);transform-origin:left top;"><b>Create</b> column <span style="color:#b22a2a">expense_category</span> from if, then,</div>
<div class="a t" id="t13" style="top:173.814px;font-size:11.69px;font-weight:400;color:#444;font-family:'Liberation Sans', sans-serif;left:40px;transform:scaleX(0.9773);transform-origin:left top;">else statements</div>
<div class="a t" id="t14" style="top:197.011px;font-size:10.73px;font-weight:700;color:#555;font-family:'Liberation Sans', sans-serif;left:56.3px;transform:scaleX(0.9047);transform-origin:left top;">20</div>
<div class="a t" id="t15" style="top:224.412px;font-size:11.57px;font-weight:400;color:#444;font-family:'Liberation Sans', sans-serif;left:40px;transform:scaleX(0.9549);transform-origin:left top;"><b>Fill empty</b> cells of <span style="color:#b22a2a">expense_category</span> with</div>
<div class="a t" id="t16" style="top:238.013px;font-size:11.65px;font-weight:400;color:#444;font-family:'Liberation Sans', sans-serif;left:40px;transform:scaleX(0.9725);transform-origin:left top;">previous value</div>
<div class="a t" id="t17" style="top:261.208px;font-size:10.73px;font-weight:700;color:#555;font-family:'Liberation Sans', sans-serif;left:56.3px;transform:scaleX(0.9047);transform-origin:left top;">15</div>
<div class="a t" id="t18" style="top:288.314px;font-size:11.56px;font-weight:400;color:#444;font-family:'Liberation Sans', sans-serif;left:40px;transform:scaleX(0.9528);transform-origin:left top;"><b>Create column</b> <span style="color:#b22a2a">TOTAL_sum</span> with formula</div>
<div class="a t" id="t19" style="top:310.011px;font-size:10.73px;font-weight:700;color:#555;font-family:'Liberation Sans', sans-serif;left:56.3px;transform:scaleX(0.9047);transform-origin:left top;">20</div>
<div class="a t" id="t20" style="top:337.503px;font-size:11.57px;font-weight:400;color:#444;font-family:'Liberation Sans', sans-serif;left:40px;transform:scaleX(0.9562);transform-origin:left top;"><b>Create column</b> <span style="color:#b22a2a">TOTAL_difference</span> with formula</div>
<div class="a t" id="t21" style="top:352.113px;font-size:11.51px;font-weight:400;color:#444;font-family:'Liberation Sans', sans-serif;left:40px;transform:scaleX(0.9449);transform-origin:left top;"><span style="color:#3062c0">TOTAL_sum - Total</span></div>
<div class="a t" id="t22" style="top:374.314px;font-size:10.73px;font-weight:700;color:#555;font-family:'Liberation Sans', sans-serif;left:56.3px;transform:scaleX(0.9047);transform-origin:left top;">20</div>
<div class="a t" id="t23" style="top:415.201px;font-size:12.03px;font-weight:700;color:#333;font-family:'Liberation Sans', sans-serif;left:114.4px;transform:scaleX(0.8978);transform-origin:left top;">ADD A NEW STEP</div>
<div class="a t" id="t24" style="top:466.014px;font-size:12.0px;font-weight:700;color:#2faaa8;font-family:'Liberation Sans', sans-serif;left:112.6px;transform:scaleX(0.8915);transform-origin:left top;">GENERATE STEPS</div>
<div class="a t" id="t25" style="top:506.011px;font-size:12.04px;font-weight:400;color:#666;font-family:'Liberation Sans', sans-serif;left:123.4px;transform:scaleX(0.8998);transform-origin:left top;">ADD A GROUP</div>
<div class="a t" id="t26" style="top:677.900px;font-size:11.88px;font-weight:700;color:#fff;font-family:'Liberation Sans', sans-serif;left:148.6px;transform:scaleX(0.9404);transform-origin:left top;">RUN</div>
<div class="a t" id="t27" style="top:699.511px;font-size:12.28px;font-weight:400;color:#666;font-family:'Liberation Sans', sans-serif;left:108px;transform:scaleX(0.9084);transform-origin:left top;">Engine: DSS</div>
<div class="a t" id="t28" style="top:95.905px;font-size:9.53px;font-weight:400;color:#bbb;font-family:'Liberation Sans', sans-serif;left:327.7px;transform:scaleX(1.0304);transform-origin:left top;">Disable</div>
<div class="a t" id="t29" style="top:107.505px;font-size:9.5px;font-weight:400;color:#bbb;font-family:'Liberation Sans', sans-serif;left:327.3px;transform:scaleX(1.0229);transform-origin:left top;">preview</div>
<div class="a t" id="t30" style="top:79.013px;font-size:16.32px;font-weight:400;color:#333;font-family:'Liberation Sans', sans-serif;left:376.25px;transform:scaleX(1.0019);transform-origin:left top;">Step preview on whole data</div>
<div class="a t" id="t31" style="top:106.265px;font-size:12.11px;font-weight:400;color:#555;font-family:'Liberation Sans', sans-serif;left:376.25px;transform:scaleX(0.9632);transform-origin:left top;"><b style="color:#555">Create column</b> <span style="color:#b22a2a">TOTAL_difference</span> …</div>
<div class="a t" id="t32" style="top:69.710px;font-size:14.53px;font-weight:400;color:#cdcdcd;font-family:'Liberation Sans', sans-serif;left:628.3px;transform:scaleX(1.0378);transform-origin:left top;">View modified rows</div>
<div class="a t" id="t33" style="top:69.709px;font-size:14.42px;font-weight:400;color:#333;font-family:'Liberation Sans', sans-serif;left:824px;transform:scaleX(1.0204);transform-origin:left top;">View all</div>
<div class="a t" id="t34" style="top:91.605px;font-size:14.51px;font-weight:400;color:#333;font-family:'Liberation Sans', sans-serif;left:628.3px;transform:scaleX(1.0351);transform-origin:left top;">rows</div>
<div class="a t" id="t35" style="top:119.308px;font-size:11.9px;font-weight:700;color:#555;font-family:'Liberation Sans', sans-serif;left:642px;transform:scaleX(0.9823);transform-origin:left top;">20</div>
<div class="a t" id="t36" style="top:70.008px;font-size:12.21px;font-weight:700;color:#333;font-family:'Liberation Sans', sans-serif;left:912.9px;transform:scaleX(0.8787);transform-origin:left top;">DISPLAY</div>
<div class="a t" id="t37" style="top:116.101px;font-size:12.3px;font-weight:700;color:#333;font-family:'Liberation Sans', sans-serif;left:929px;transform:scaleX(0.8483);transform-origin:left top;">TABLE</div>
<div class="a t" id="t38" style="top:116.114px;font-size:12.45px;font-weight:700;color:#333;font-family:'Liberation Sans', sans-serif;left:1000.2px;transform:scaleX(0.8716);transform-origin:left top;">COLUMNS</div>
<div class="a t" id="t39" style="top:167.211px;font-size:11.76px;font-weight:700;color:#555;font-family:'Liberation Sans', sans-serif;right:48.299999999999955px;transform:scaleX(0.9169);transform-origin:right top;"><span style="color:#555">20 rows</span> <span style="color:#aaa">-</span> <span style="color:#1a7fc1">17 columns</span></div>
<div class="a t" id="t40" style="top:208.216px;font-size:12.4px;font-weight:700;color:#333;font-family:'Liberation Sans', sans-serif;left:374.75px;transform:scaleX(0.8975);transform-origin:left top;">August</div>
<div class="a t" id="t41" style="top:238.100px;font-size:10.2px;font-weight:400;color:#666;font-family:'Liberation Mono', monospace;left:364.25px;">bigint</div>
<div class="a t" id="t42" style="top:256.011px;font-size:11.32px;font-weight:400;color:#1f9bd6;font-family:'Liberation Sans', sans-serif;left:364.25px;transform:scaleX(0.9082);transform-origin:left top;">Integer</div>
<div class="a t" id="t43" style="top:208.202px;font-size:12.62px;font-weight:700;color:#333;font-family:'Liberation Sans', sans-serif;left:474.75px;transform:scaleX(0.9329);transform-origin:left top;">September</div>
<div class="a t" id="t44" style="top:238.100px;font-size:10.2px;font-weight:400;color:#666;font-family:'Liberation Mono', monospace;left:464.25px;">bigint</div>
<div class="a t" id="t45" style="top:256.011px;font-size:11.32px;font-weight:400;color:#1f9bd6;font-family:'Liberation Sans', sans-serif;left:464.25px;transform:scaleX(0.9082);transform-origin:left top;">Integer</div>
<div class="a t" id="t46" style="top:208.210px;font-size:12.61px;font-weight:700;color:#333;font-family:'Liberation Sans', sans-serif;left:574.75px;transform:scaleX(0.9305);transform-origin:left top;">October</div>
<div class="a t" id="t47" style="top:238.100px;font-size:10.2px;font-weight:400;color:#666;font-family:'Liberation Mono', monospace;left:564.25px;">bigint</div>
<div class="a t" id="t48" style="top:256.011px;font-size:11.32px;font-weight:400;color:#1f9bd6;font-family:'Liberation Sans', sans-serif;left:564.25px;transform:scaleX(0.9082);transform-origin:left top;">Integer</div>
<div class="a t" id="t49" style="top:208.207px;font-size:12.65px;font-weight:700;color:#333;font-family:'Liberation Sans', sans-serif;left:674.75px;transform:scaleX(0.9397);transform-origin:left top;">November</div>
<div class="a t" id="t50" style="top:238.100px;font-size:10.2px;font-weight:400;color:#666;font-family:'Liberation Mono', monospace;left:664.25px;">bigint</div>
<div class="a t" id="t51" style="top:256.011px;font-size:11.32px;font-weight:400;color:#1f9bd6;font-family:'Liberation Sans', sans-serif;left:664.25px;transform:scaleX(0.9082);transform-origin:left top;">Integer</div>
<div class="a t" id="t52" style="top:208.211px;font-size:12.59px;font-weight:700;color:#333;font-family:'Liberation Sans', sans-serif;left:774.75px;transform:scaleX(0.9288);transform-origin:left top;">December</div>
<div class="a t" id="t53" style="top:238.100px;font-size:10.2px;font-weight:400;color:#666;font-family:'Liberation Mono', monospace;left:764.25px;">bigint</div>
<div class="a t" id="t54" style="top:256.011px;font-size:11.32px;font-weight:400;color:#1f9bd6;font-family:'Liberation Sans', sans-serif;left:764.25px;transform:scaleX(0.9082);transform-origin:left top;">Integer</div>
<div class="a t" id="t55" style="top:208.216px;font-size:12.4px;font-weight:700;color:#333;font-family:'Liberation Sans', sans-serif;left:875.0px;transform:scaleX(0.8962);transform-origin:left top;">TOTAL_sum</div>
<div class="a t" id="t56" style="top:238.100px;font-size:10.2px;font-weight:400;color:#666;font-family:'Liberation Mono', monospace;left:864.5px;">double</div>
<div class="a t" id="t57" style="top:256.015px;font-size:11.26px;font-weight:400;color:#1f9bd6;font-family:'Liberation Sans', sans-serif;left:864.5px;transform:scaleX(0.8957);transform-origin:left top;">Decimal</div>
<div class="a t" id="t58" style="top:208.206px;font-size:12.67px;font-weight:700;color:#333;font-family:'Liberation Sans', sans-serif;left:1009.0px;transform:scaleX(0.9421);transform-origin:left top;">Total</div>
<div class="a t" id="t59" style="top:238.100px;font-size:10.2px;font-weight:400;color:#666;font-family:'Liberation Mono', monospace;left:998.5px;">bigint</div>
<div class="a t" id="t60" style="top:256.011px;font-size:11.32px;font-weight:400;color:#1f9bd6;font-family:'Liberation Sans', sans-serif;left:998.5px;transform:scaleX(0.9082);transform-origin:left top;">Integer</div>
<div class="a t" id="t61" style="top:208.208px;font-size:12.52px;font-weight:700;color:#333;font-family:'Liberation Sans', sans-serif;left:1109.0px;transform:scaleX(0.9167);transform-origin:left top;">TOTAL_difference</div>
<div class="a t" id="t62" style="top:238.100px;font-size:10.2px;font-weight:400;color:#666;font-family:'Liberation Mono', monospace;left:1098.5px;">double</div>
<div class="a t" id="t63" style="top:256.015px;font-size:11.26px;font-weight:400;color:#1f9bd6;font-family:'Liberation Sans', sans-serif;left:1098.5px;transform:scaleX(0.8957);transform-origin:left top;">Decimal</div>
<div class="a t" id="t64" style="top:286.110px;font-size:12.4px;font-weight:400;color:#333;font-family:'Liberation Sans', sans-serif;right:927.15px;transform:scaleX(0.935);transform-origin:right top;">0</div>
<div class="a t" id="t65" style="top:286.110px;font-size:12.4px;font-weight:400;color:#333;font-family:'Liberation Sans', sans-serif;right:827.15px;transform:scaleX(0.935);transform-origin:right top;">0</div>
<div class="a t" id="t66" style="top:286.110px;font-size:12.4px;font-weight:400;color:#333;font-family:'Liberation Sans', sans-serif;right:727.15px;transform:scaleX(0.935);transform-origin:right top;">0</div>
<div class="a t" id="t67" style="top:286.110px;font-size:12.4px;font-weight:400;color:#333;font-family:'Liberation Sans', sans-serif;right:627.15px;transform:scaleX(0.935);transform-origin:right top;">0</div>
<div class="a t" id="t68" style="top:286.110px;font-size:12.4px;font-weight:400;color:#333;font-family:'Liberation Sans', sans-serif;right:527.15px;transform:scaleX(0.935);transform-origin:right top;">0</div>
<div class="a t" id="t69" style="top:286.110px;font-size:12.4px;font-weight:400;color:#333;font-family:'Liberation Sans', sans-serif;right:426.9px;transform:scaleX(0.935);transform-origin:right top;">0</div>
<div class="a t" id="t70" style="top:286.110px;font-size:12.4px;font-weight:400;color:#333;font-family:'Liberation Sans', sans-serif;right:292.9px;transform:scaleX(0.935);transform-origin:right top;">659130.0</div>
<div class="a t" id="t71" style="top:286.110px;font-size:12.4px;font-weight:400;color:#333;font-family:'Liberation Sans', sans-serif;right:192.9000000000001px;transform:scaleX(0.935);transform-origin:right top;">659130</div>
<div class="a t" id="t72" style="top:286.110px;font-size:12.4px;font-weight:400;color:#333;font-family:'Liberation Sans', sans-serif;right:58.40000000000009px;transform:scaleX(0.935);transform-origin:right top;">0.0</div>
<div class="a t" id="t73" style="top:313.110px;font-size:12.4px;font-weight:400;color:#333;font-family:'Liberation Sans', sans-serif;right:927.15px;transform:scaleX(0.935);transform-origin:right top;">0</div>
<div class="a t" id="t74" style="top:313.110px;font-size:12.4px;font-weight:400;color:#333;font-family:'Liberation Sans', sans-serif;right:827.15px;transform:scaleX(0.935);transform-origin:right top;">0</div>
<div class="a t" id="t75" style="top:313.110px;font-size:12.4px;font-weight:400;color:#333;font-family:'Liberation Sans', sans-serif;right:727.15px;transform:scaleX(0.935);transform-origin:right top;">0</div>
<div class="a t" id="t76" style="top:313.110px;font-size:12.4px;font-weight:400;color:#333;font-family:'Liberation Sans', sans-serif;right:627.15px;transform:scaleX(0.935);transform-origin:right top;">0</div>
<div class="a t" id="t77" style="top:313.110px;font-size:12.4px;font-weight:400;color:#333;font-family:'Liberation Sans', sans-serif;right:527.15px;transform:scaleX(0.935);transform-origin:right top;">0</div>
<div class="a t" id="t78" style="top:313.110px;font-size:12.4px;font-weight:400;color:#333;font-family:'Liberation Sans', sans-serif;right:426.9px;transform:scaleX(0.935);transform-origin:right top;">0</div>
<div class="a t" id="t79" style="top:313.110px;font-size:12.4px;font-weight:400;color:#333;font-family:'Liberation Sans', sans-serif;right:292.9px;transform:scaleX(0.935);transform-origin:right top;">519000.0</div>
<div class="a t" id="t80" style="top:313.110px;font-size:12.4px;font-weight:400;color:#333;font-family:'Liberation Sans', sans-serif;right:192.9000000000001px;transform:scaleX(0.935);transform-origin:right top;">519000</div>
<div class="a t" id="t81" style="top:313.110px;font-size:12.4px;font-weight:400;color:#333;font-family:'Liberation Sans', sans-serif;right:58.40000000000009px;transform:scaleX(0.935);transform-origin:right top;">0.0</div>
<div class="a t" id="t82" style="top:340.110px;font-size:12.4px;font-weight:400;color:#333;font-family:'Liberation Sans', sans-serif;right:927.15px;transform:scaleX(0.935);transform-origin:right top;">0</div>
<div class="a t" id="t83" style="top:340.110px;font-size:12.4px;font-weight:400;color:#333;font-family:'Liberation Sans', sans-serif;right:827.15px;transform:scaleX(0.935);transform-origin:right top;">0</div>
<div class="a t" id="t84" style="top:340.110px;font-size:12.4px;font-weight:400;color:#333;font-family:'Liberation Sans', sans-serif;right:727.15px;transform:scaleX(0.935);transform-origin:right top;">0</div>
<div class="a t" id="t85" style="top:340.110px;font-size:12.4px;font-weight:400;color:#333;font-family:'Liberation Sans', sans-serif;right:627.15px;transform:scaleX(0.935);transform-origin:right top;">0</div>
<div class="a t" id="t86" style="top:340.110px;font-size:12.4px;font-weight:400;color:#333;font-family:'Liberation Sans', sans-serif;right:527.15px;transform:scaleX(0.935);transform-origin:right top;">0</div>
<div class="a t" id="t87" style="top:340.110px;font-size:12.4px;font-weight:400;color:#333;font-family:'Liberation Sans', sans-serif;right:426.9px;transform:scaleX(0.935);transform-origin:right top;">0</div>
<div class="a t" id="t88" style="top:340.110px;font-size:12.4px;font-weight:400;color:#333;font-family:'Liberation Sans', sans-serif;right:292.9px;transform:scaleX(0.935);transform-origin:right top;">140130.0</div>
<div class="a t" id="t89" style="top:340.110px;font-size:12.4px;font-weight:400;color:#333;font-family:'Liberation Sans', sans-serif;right:192.9000000000001px;transform:scaleX(0.935);transform-origin:right top;">140130</div>
<div class="a t" id="t90" style="top:340.110px;font-size:12.4px;font-weight:400;color:#333;font-family:'Liberation Sans', sans-serif;right:58.40000000000009px;transform:scaleX(0.935);transform-origin:right top;">0.0</div>
<div class="a t" id="t91" style="top:367.110px;font-size:12.4px;font-weight:400;color:#333;font-family:'Liberation Sans', sans-serif;right:927.15px;transform:scaleX(0.935);transform-origin:right top;">0</div>
<div class="a t" id="t92" style="top:367.110px;font-size:12.4px;font-weight:400;color:#333;font-family:'Liberation Sans', sans-serif;right:827.15px;transform:scaleX(0.935);transform-origin:right top;">0</div>
<div class="a t" id="t93" style="top:367.110px;font-size:12.4px;font-weight:400;color:#333;font-family:'Liberation Sans', sans-serif;right:727.15px;transform:scaleX(0.935);transform-origin:right top;">0</div>
<div class="a t" id="t94" style="top:367.110px;font-size:12.4px;font-weight:400;color:#333;font-family:'Liberation Sans', sans-serif;right:627.15px;transform:scaleX(0.935);transform-origin:right top;">0</div>
<div class="a t" id="t95" style="top:367.110px;font-size:12.4px;font-weight:400;color:#333;font-family:'Liberation Sans', sans-serif;right:527.15px;transform:scaleX(0.935);transform-origin:right top;">0</div>
<div class="a t" id="t96" style="top:367.110px;font-size:12.4px;font-weight:400;color:#333;font-family:'Liberation Sans', sans-serif;right:426.9px;transform:scaleX(0.935);transform-origin:right top;">0</div>
<div class="a t" id="t97" style="top:367.110px;font-size:12.4px;font-weight:400;color:#333;font-family:'Liberation Sans', sans-serif;right:292.9px;transform:scaleX(0.935);transform-origin:right top;">64475.0</div>
<div class="a t" id="t98" style="top:367.110px;font-size:12.4px;font-weight:400;color:#333;font-family:'Liberation Sans', sans-serif;right:192.9000000000001px;transform:scaleX(0.935);transform-origin:right top;">64475</div>
<div class="a t" id="t99" style="top:367.110px;font-size:12.4px;font-weight:400;color:#333;font-family:'Liberation Sans', sans-serif;right:58.40000000000009px;transform:scaleX(0.935);transform-origin:right top;">0.0</div>
<div class="a t" id="t100" style="top:394.110px;font-size:12.4px;font-weight:400;color:#333;font-family:'Liberation Sans', sans-serif;right:927.15px;transform:scaleX(0.935);transform-origin:right top;">0</div>
<div class="a t" id="t101" style="top:394.110px;font-size:12.4px;font-weight:400;color:#333;font-family:'Liberation Sans', sans-serif;right:827.15px;transform:scaleX(0.935);transform-origin:right top;">0</div>
<div class="a t" id="t102" style="top:394.110px;font-size:12.4px;font-weight:400;color:#333;font-family:'Liberation Sans', sans-serif;right:727.15px;transform:scaleX(0.935);transform-origin:right top;">0</div>
<div class="a t" id="t103" style="top:394.110px;font-size:12.4px;font-weight:400;color:#333;font-family:'Liberation Sans', sans-serif;right:627.15px;transform:scaleX(0.935);transform-origin:right top;">0</div>
<div class="a t" id="t104" style="top:394.110px;font-size:12.4px;font-weight:400;color:#333;font-family:'Liberation Sans', sans-serif;right:527.15px;transform:scaleX(0.935);transform-origin:right top;">0</div>
<div class="a t" id="t105" style="top:394.110px;font-size:12.4px;font-weight:400;color:#333;font-family:'Liberation Sans', sans-serif;right:426.9px;transform:scaleX(0.935);transform-origin:right top;">0</div>
<div class="a t" id="t106" style="top:394.110px;font-size:12.4px;font-weight:400;color:#333;font-family:'Liberation Sans', sans-serif;right:292.9px;transform:scaleX(0.935);transform-origin:right top;">58800.0</div>
<div class="a t" id="t107" style="top:394.110px;font-size:12.4px;font-weight:400;color:#333;font-family:'Liberation Sans', sans-serif;right:192.9000000000001px;transform:scaleX(0.935);transform-origin:right top;">58800</div>
<div class="a t" id="t108" style="top:394.110px;font-size:12.4px;font-weight:400;color:#333;font-family:'Liberation Sans', sans-serif;right:58.40000000000009px;transform:scaleX(0.935);transform-origin:right top;">0.0</div>
<div class="a t" id="t109" style="top:421.110px;font-size:12.4px;font-weight:400;color:#333;font-family:'Liberation Sans', sans-serif;right:927.15px;transform:scaleX(0.935);transform-origin:right top;">0</div>
<div class="a t" id="t110" style="top:421.110px;font-size:12.4px;font-weight:400;color:#333;font-family:'Liberation Sans', sans-serif;right:827.15px;transform:scaleX(0.935);transform-origin:right top;">0</div>
<div class="a t" id="t111" style="top:421.110px;font-size:12.4px;font-weight:400;color:#333;font-family:'Liberation Sans', sans-serif;right:727.15px;transform:scaleX(0.935);transform-origin:right top;">0</div>
<div class="a t" id="t112" style="top:421.110px;font-size:12.4px;font-weight:400;color:#333;font-family:'Liberation Sans', sans-serif;right:627.15px;transform:scaleX(0.935);transform-origin:right top;">0</div>
<div class="a t" id="t113" style="top:421.110px;font-size:12.4px;font-weight:400;color:#333;font-family:'Liberation Sans', sans-serif;right:527.15px;transform:scaleX(0.935);transform-origin:right top;">0</div>
<div class="a t" id="t114" style="top:421.110px;font-size:12.4px;font-weight:400;color:#333;font-family:'Liberation Sans', sans-serif;right:426.9px;transform:scaleX(0.935);transform-origin:right top;">0</div>
<div class="a t" id="t115" style="top:421.110px;font-size:12.4px;font-weight:400;color:#333;font-family:'Liberation Sans', sans-serif;right:292.9px;transform:scaleX(0.935);transform-origin:right top;">1224.0</div>
<div class="a t" id="t116" style="top:421.110px;font-size:12.4px;font-weight:400;color:#333;font-family:'Liberation Sans', sans-serif;right:192.9000000000001px;transform:scaleX(0.935);transform-origin:right top;">1224</div>
<div class="a t" id="t117" style="top:421.110px;font-size:12.4px;font-weight:400;color:#333;font-family:'Liberation Sans', sans-serif;right:58.40000000000009px;transform:scaleX(0.935);transform-origin:right top;">0.0</div>
<div class="a t" id="t118" style="top:448.110px;font-size:12.4px;font-weight:400;color:#333;font-family:'Liberation Sans', sans-serif;right:927.15px;transform:scaleX(0.935);transform-origin:right top;">0</div>
<div class="a t" id="t119" style="top:448.110px;font-size:12.4px;font-weight:400;color:#333;font-family:'Liberation Sans', sans-serif;right:827.15px;transform:scaleX(0.935);transform-origin:right top;">0</div>
<div class="a t" id="t120" style="top:448.110px;font-size:12.4px;font-weight:400;color:#333;font-family:'Liberation Sans', sans-serif;right:727.15px;transform:scaleX(0.935);transform-origin:right top;">0</div>
<div class="a t" id="t121" style="top:448.110px;font-size:12.4px;font-weight:400;color:#333;font-family:'Liberation Sans', sans-serif;right:627.15px;transform:scaleX(0.935);transform-origin:right top;">0</div>
<div class="a t" id="t122" style="top:448.110px;font-size:12.4px;font-weight:400;color:#333;font-family:'Liberation Sans', sans-serif;right:527.15px;transform:scaleX(0.935);transform-origin:right top;">0</div>
<div class="a t" id="t123" style="top:448.110px;font-size:12.4px;font-weight:400;color:#333;font-family:'Liberation Sans', sans-serif;right:426.9px;transform:scaleX(0.935);transform-origin:right top;">0</div>
<div class="a t" id="t124" style="top:448.110px;font-size:12.4px;font-weight:400;color:#333;font-family:'Liberation Sans', sans-serif;right:292.9px;transform:scaleX(0.935);transform-origin:right top;">1729.0</div>
<div class="a t" id="t125" style="top:448.110px;font-size:12.4px;font-weight:400;color:#333;font-family:'Liberation Sans', sans-serif;right:192.9000000000001px;transform:scaleX(0.935);transform-origin:right top;">1729</div>
<div class="a t" id="t126" style="top:448.110px;font-size:12.4px;font-weight:400;color:#333;font-family:'Liberation Sans', sans-serif;right:58.40000000000009px;transform:scaleX(0.935);transform-origin:right top;">0.0</div>
<div class="a t" id="t127" style="top:475.110px;font-size:12.4px;font-weight:400;color:#333;font-family:'Liberation Sans', sans-serif;right:927.15px;transform:scaleX(0.935);transform-origin:right top;">0</div>
<div class="a t" id="t128" style="top:475.110px;font-size:12.4px;font-weight:400;color:#333;font-family:'Liberation Sans', sans-serif;right:827.15px;transform:scaleX(0.935);transform-origin:right top;">0</div>
<div class="a t" id="t129" style="top:475.110px;font-size:12.4px;font-weight:400;color:#333;font-family:'Liberation Sans', sans-serif;right:727.15px;transform:scaleX(0.935);transform-origin:right top;">0</div>
<div class="a t" id="t130" style="top:475.110px;font-size:12.4px;font-weight:400;color:#333;font-family:'Liberation Sans', sans-serif;right:627.15px;transform:scaleX(0.935);transform-origin:right top;">0</div>
<div class="a t" id="t131" style="top:475.110px;font-size:12.4px;font-weight:400;color:#333;font-family:'Liberation Sans', sans-serif;right:527.15px;transform:scaleX(0.935);transform-origin:right top;">0</div>
<div class="a t" id="t132" style="top:475.110px;font-size:12.4px;font-weight:400;color:#333;font-family:'Liberation Sans', sans-serif;right:426.9px;transform:scaleX(0.935);transform-origin:right top;">0</div>
<div class="a t" id="t133" style="top:475.110px;font-size:12.4px;font-weight:400;color:#333;font-family:'Liberation Sans', sans-serif;right:292.9px;transform:scaleX(0.935);transform-origin:right top;">208.0</div>
<div class="a t" id="t134" style="top:475.110px;font-size:12.4px;font-weight:400;color:#333;font-family:'Liberation Sans', sans-serif;right:192.9000000000001px;transform:scaleX(0.935);transform-origin:right top;">208</div>
<div class="a t" id="t135" style="top:475.110px;font-size:12.4px;font-weight:400;color:#333;font-family:'Liberation Sans', sans-serif;right:58.40000000000009px;transform:scaleX(0.935);transform-origin:right top;">0.0</div>
<div class="a t" id="t136" style="top:502.110px;font-size:12.4px;font-weight:400;color:#333;font-family:'Liberation Sans', sans-serif;right:927.15px;transform:scaleX(0.935);transform-origin:right top;">0</div>
<div class="a t" id="t137" style="top:502.110px;font-size:12.4px;font-weight:400;color:#333;font-family:'Liberation Sans', sans-serif;right:827.15px;transform:scaleX(0.935);transform-origin:right top;">0</div>
<div class="a t" id="t138" style="top:502.110px;font-size:12.4px;font-weight:400;color:#333;font-family:'Liberation Sans', sans-serif;right:727.15px;transform:scaleX(0.935);transform-origin:right top;">0</div>
<div class="a t" id="t139" style="top:502.110px;font-size:12.4px;font-weight:400;color:#333;font-family:'Liberation Sans', sans-serif;right:627.15px;transform:scaleX(0.935);transform-origin:right top;">0</div>
<div class="a t" id="t140" style="top:502.110px;font-size:12.4px;font-weight:400;color:#333;font-family:'Liberation Sans', sans-serif;right:527.15px;transform:scaleX(0.935);transform-origin:right top;">0</div>
<div class="a t" id="t141" style="top:502.110px;font-size:12.4px;font-weight:400;color:#333;font-family:'Liberation Sans', sans-serif;right:426.9px;transform:scaleX(0.935);transform-origin:right top;">0</div>
<div class="a t" id="t142" style="top:502.110px;font-size:12.4px;font-weight:400;color:#333;font-family:'Liberation Sans', sans-serif;right:292.9px;transform:scaleX(0.935);transform-origin:right top;">1434.0</div>
<div class="a t" id="t143" style="top:502.110px;font-size:12.4px;font-weight:400;color:#333;font-family:'Liberation Sans', sans-serif;right:192.9000000000001px;transform:scaleX(0.935);transform-origin:right top;">1434</div>
<div class="a t" id="t144" style="top:502.110px;font-size:12.4px;font-weight:400;color:#333;font-family:'Liberation Sans', sans-serif;right:58.40000000000009px;transform:scaleX(0.935);transform-origin:right top;">0.0</div>
<div class="a t" id="t145" style="top:529.110px;font-size:12.4px;font-weight:400;color:#333;font-family:'Liberation Sans', sans-serif;right:927.15px;transform:scaleX(0.935);transform-origin:right top;">0</div>
<div class="a t" id="t146" style="top:529.110px;font-size:12.4px;font-weight:400;color:#333;font-family:'Liberation Sans', sans-serif;right:827.15px;transform:scaleX(0.935);transform-origin:right top;">0</div>
<div class="a t" id="t147" style="top:529.110px;font-size:12.4px;font-weight:400;color:#333;font-family:'Liberation Sans', sans-serif;right:727.15px;transform:scaleX(0.935);transform-origin:right top;">0</div>
<div class="a t" id="t148" style="top:529.110px;font-size:12.4px;font-weight:400;color:#333;font-family:'Liberation Sans', sans-serif;right:627.15px;transform:scaleX(0.935);transform-origin:right top;">0</div>
<div class="a t" id="t149" style="top:529.110px;font-size:12.4px;font-weight:400;color:#333;font-family:'Liberation Sans', sans-serif;right:527.15px;transform:scaleX(0.935);transform-origin:right top;">0</div>
<div class="a t" id="t150" style="top:529.110px;font-size:12.4px;font-weight:400;color:#333;font-family:'Liberation Sans', sans-serif;right:426.9px;transform:scaleX(0.935);transform-origin:right top;">0</div>
<div class="a t" id="t151" style="top:529.110px;font-size:12.4px;font-weight:400;color:#333;font-family:'Liberation Sans', sans-serif;right:292.9px;transform:scaleX(0.935);transform-origin:right top;">1080.0</div>
<div class="a t" id="t152" style="top:529.110px;font-size:12.4px;font-weight:400;color:#333;font-family:'Liberation Sans', sans-serif;right:192.9000000000001px;transform:scaleX(0.935);transform-origin:right top;">1080</div>
<div class="a t" id="t153" style="top:529.110px;font-size:12.4px;font-weight:400;color:#333;font-family:'Liberation Sans', sans-serif;right:58.40000000000009px;transform:scaleX(0.935);transform-origin:right top;">0.0</div>
<div class="a t" id="t154" style="top:556.110px;font-size:12.4px;font-weight:400;color:#333;font-family:'Liberation Sans', sans-serif;right:927.15px;transform:scaleX(0.935);transform-origin:right top;">0</div>
<div class="a t" id="t155" style="top:556.110px;font-size:12.4px;font-weight:400;color:#333;font-family:'Liberation Sans', sans-serif;right:827.15px;transform:scaleX(0.935);transform-origin:right top;">0</div>
<div class="a t" id="t156" style="top:556.110px;font-size:12.4px;font-weight:400;color:#333;font-family:'Liberation Sans', sans-serif;right:727.15px;transform:scaleX(0.935);transform-origin:right top;">0</div>
<div class="a t" id="t157" style="top:556.110px;font-size:12.4px;font-weight:400;color:#333;font-family:'Liberation Sans', sans-serif;right:627.15px;transform:scaleX(0.935);transform-origin:right top;">0</div>
<div class="a t" id="t158" style="top:556.110px;font-size:12.4px;font-weight:400;color:#333;font-family:'Liberation Sans', sans-serif;right:527.15px;transform:scaleX(0.935);transform-origin:right top;">0</div>
<div class="a t" id="t159" style="top:556.110px;font-size:12.4px;font-weight:400;color:#333;font-family:'Liberation Sans', sans-serif;right:426.9px;transform:scaleX(0.935);transform-origin:right top;">0</div>
<div class="a t" id="t160" style="top:556.110px;font-size:12.4px;font-weight:400;color:#333;font-family:'Liberation Sans', sans-serif;right:292.9px;transform:scaleX(0.935);transform-origin:right top;">32080.0</div>
<div class="a t" id="t161" style="top:556.110px;font-size:12.4px;font-weight:400;color:#333;font-family:'Liberation Sans', sans-serif;right:192.9000000000001px;transform:scaleX(0.935);transform-origin:right top;">32080</div>
<div class="a t" id="t162" style="top:556.110px;font-size:12.4px;font-weight:400;color:#333;font-family:'Liberation Sans', sans-serif;right:58.40000000000009px;transform:scaleX(0.935);transform-origin:right top;">0.0</div>
<div class="a t" id="t163" style="top:583.110px;font-size:12.4px;font-weight:400;color:#333;font-family:'Liberation Sans', sans-serif;right:927.15px;transform:scaleX(0.935);transform-origin:right top;">0</div>
<div class="a t" id="t164" style="top:583.110px;font-size:12.4px;font-weight:400;color:#333;font-family:'Liberation Sans', sans-serif;right:827.15px;transform:scaleX(0.935);transform-origin:right top;">0</div>
<div class="a t" id="t165" style="top:583.110px;font-size:12.4px;font-weight:400;color:#333;font-family:'Liberation Sans', sans-serif;right:727.15px;transform:scaleX(0.935);transform-origin:right top;">0</div>
<div class="a t" id="t166" style="top:583.110px;font-size:12.4px;font-weight:400;color:#333;font-family:'Liberation Sans', sans-serif;right:627.15px;transform:scaleX(0.935);transform-origin:right top;">0</div>
<div class="a t" id="t167" style="top:583.110px;font-size:12.4px;font-weight:400;color:#333;font-family:'Liberation Sans', sans-serif;right:527.15px;transform:scaleX(0.935);transform-origin:right top;">0</div>
<div class="a t" id="t168" style="top:583.110px;font-size:12.4px;font-weight:400;color:#333;font-family:'Liberation Sans', sans-serif;right:426.9px;transform:scaleX(0.935);transform-origin:right top;">0</div>
<div class="a t" id="t169" style="top:583.110px;font-size:12.4px;font-weight:400;color:#333;font-family:'Liberation Sans', sans-serif;right:292.9px;transform:scaleX(0.935);transform-origin:right top;">3000.0</div>
<div class="a t" id="t170" style="top:583.110px;font-size:12.4px;font-weight:400;color:#333;font-family:'Liberation Sans', sans-serif;right:192.9000000000001px;transform:scaleX(0.935);transform-origin:right top;">3000</div>
<div class="a t" id="t171" style="top:583.110px;font-size:12.4px;font-weight:400;color:#333;font-family:'Liberation Sans', sans-serif;right:58.40000000000009px;transform:scaleX(0.935);transform-origin:right top;">0.0</div>
<div class="a t" id="t172" style="top:610.110px;font-size:12.4px;font-weight:400;color:#333;font-family:'Liberation Sans', sans-serif;right:927.15px;transform:scaleX(0.935);transform-origin:right top;">0</div>
<div class="a t" id="t173" style="top:610.110px;font-size:12.4px;font-weight:400;color:#333;font-family:'Liberation Sans', sans-serif;right:827.15px;transform:scaleX(0.935);transform-origin:right top;">0</div>
<div class="a t" id="t174" style="top:610.110px;font-size:12.4px;font-weight:400;color:#333;font-family:'Liberation Sans', sans-serif;right:727.15px;transform:scaleX(0.935);transform-origin:right top;">0</div>
<div class="a t" id="t175" style="top:610.110px;font-size:12.4px;font-weight:400;color:#333;font-family:'Liberation Sans', sans-serif;right:627.15px;transform:scaleX(0.935);transform-origin:right top;">0</div>
<div class="a t" id="t176" style="top:610.110px;font-size:12.4px;font-weight:400;color:#333;font-family:'Liberation Sans', sans-serif;right:527.15px;transform:scaleX(0.935);transform-origin:right top;">0</div>
<div class="a t" id="t177" style="top:610.110px;font-size:12.4px;font-weight:400;color:#333;font-family:'Liberation Sans', sans-serif;right:426.9px;transform:scaleX(0.935);transform-origin:right top;">0</div>
<div class="a t" id="t178" style="top:610.110px;font-size:12.4px;font-weight:400;color:#333;font-family:'Liberation Sans', sans-serif;right:292.9px;transform:scaleX(0.935);transform-origin:right top;">2500.0</div>
<div class="a t" id="t179" style="top:610.110px;font-size:12.4px;font-weight:400;color:#333;font-family:'Liberation Sans', sans-serif;right:192.9000000000001px;transform:scaleX(0.935);transform-origin:right top;">2500</div>
<div class="a t" id="t180" style="top:610.110px;font-size:12.4px;font-weight:400;color:#333;font-family:'Liberation Sans', sans-serif;right:58.40000000000009px;transform:scaleX(0.935);transform-origin:right top;">0.0</div>
<div class="a t" id="t181" style="top:658.011px;font-size:15.75px;font-weight:700;color:#21611f;font-family:'Liberation Sans', sans-serif;left:329.4px;transform:scaleX(0.9647);transform-origin:left top;">Job succeeded.</div>
<div class="a t" id="t182" style="top:678.515px;font-size:12.22px;font-weight:400;color:#1a82c8;font-family:'Liberation Sans', sans-serif;left:329.4px;transform:scaleX(0.9849);transform-origin:left top;">View details</div>
<div class="a t" id="t183" style="top:698.509px;font-size:12.19px;font-weight:400;color:#1a82c8;font-family:'Liberation Sans', sans-serif;left:329.4px;transform:scaleX(0.9783);transform-origin:left top;">Explore dataset Actual_Expenses_category</div>
<div class="a t" id="t184" style="top:667.310px;font-size:31.5px;font-weight:400;color:#fff;font-family:'Liberation Sans', sans-serif;left:-136.8px;width:400px;text-align:center;-webkit-text-stroke:0.45px #fff;">2</div>
<div class="a t" id="t185" style="top:636.007px;font-size:31.5px;font-weight:400;color:#fff;font-family:'Liberation Sans', sans-serif;left:279.6px;width:400px;text-align:center;-webkit-text-stroke:0.45px #fff;">3</div>
</body></html>
